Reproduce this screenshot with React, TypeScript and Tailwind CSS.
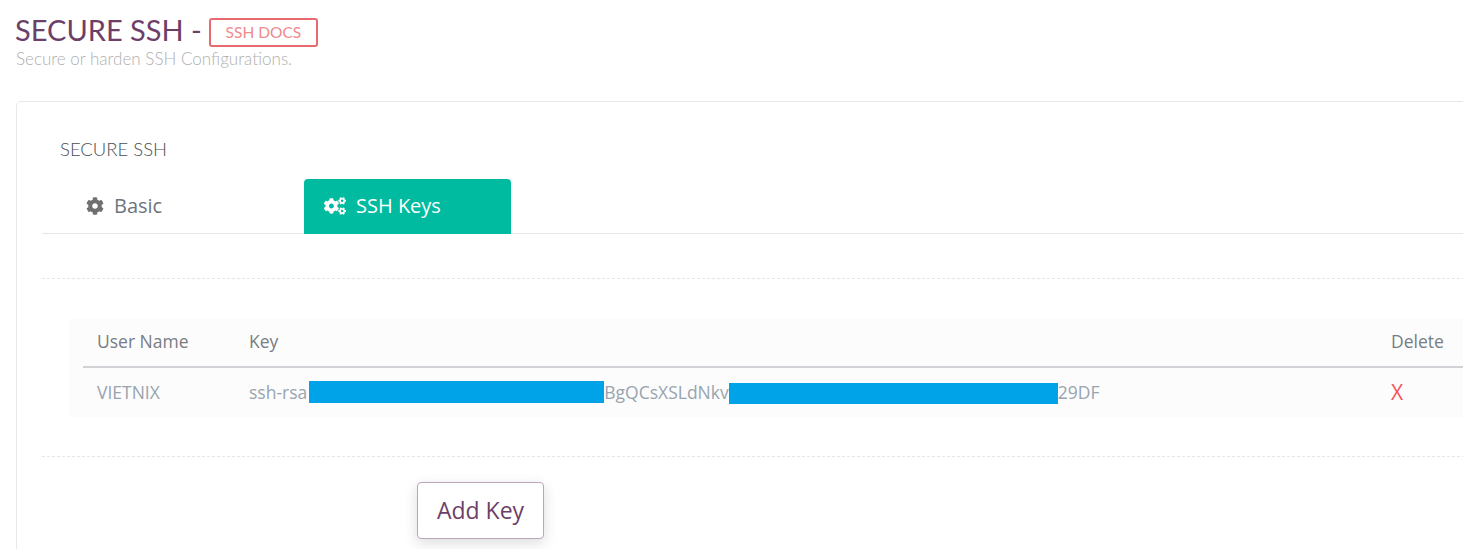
import { FaCog, FaCogs } from 'react-icons/fa';

const openSans = { fontFamily: '"Open Sans", sans-serif' };

export default function App() {
  return (
    <div className="h-[549px] w-[1463px] overflow-hidden bg-white pl-4 font-['Lato',sans-serif]">
      <div className="flex h-[48px] items-end">
        <h1 className="-ml-[1px] text-[29px] leading-[36px] font-normal text-[#6d3f68]">SECURE SSH -</h1>
        <a className="mb-[1px] ml-[7px] flex h-[29px] w-[109px] items-center justify-center rounded-[3px] border-2 border-[#e86a6f] text-[15.5px] text-[#f08a8c]">
          SSH DOCS
        </a>
      </div>
      <p className="h-[53px] text-[17px] leading-[22px] font-light text-[#b0b0b0]">
        Secure or harden SSH Configurations.
      </p>

      <div className="h-[470px] w-[1480px] rounded-[5px] border border-[#e8e8e8] pt-[36px] pl-[25px]">
        <h2 className="pl-[18px] text-[18.5px] leading-[22px] font-light text-[#4a4e52]">SECURE SSH</h2>

        <div className="mt-[19px] flex h-[55px] border-b border-[#e4e6e8]" style={openSans}>
          <div className="flex h-[54px] w-[262px] items-center pl-[44px] text-[20px] text-[#6c757d]">
            <FaCog className="mr-[10px] h-[18px] w-[18px] text-[#6f6f6f]" />
            Basic
          </div>
          <div className="flex h-[55px] w-[207px] items-center rounded-t-[4px] bg-[#00bb9f] pb-[1px] pl-[20px] text-[20px] text-white">
            <FaCogs className="mr-[10px] h-[22px] w-[22px]" />
            SSH Keys
          </div>
        </div>

        <div className="mt-[44px] border-t border-dashed border-[#e4e6e8]" />

        <div className="mt-[40px] ml-[28px] bg-[#fcfcfd] px-[13px]" style={openSans}>
          <div className="flex h-[49px] items-center border-b-2 border-[#d0d2d5] pb-[2px] text-[17.5px] text-[#777d82]">
            <span className="w-[166px] pl-[14px]">User Name</span>
            <span className="w-[1142px]">Key</span>
            <span>Delete</span>
          </div>
          <div className="flex h-[49px] items-center text-[17.5px] text-[#98a4ae]">
            <span className="w-[166px] pl-[14px]">VIETNIX</span>
            <div className="flex w-[1142px] items-center">
              <span>ssh-rsa</span>
              <span className="mb-[2px] ml-[2px] h-[22px] w-[295px] bg-[#00a2e8]" />
              <span>BgQCsXSLdNkv</span>
              <span className="mt-[1px] h-[21px] w-[329px] bg-[#00a2e8]" />
              <span>29DF</span>
            </div>
            <span className="text-[21px] text-[#f4545a]">X</span>
          </div>
        </div>

        <div className="mt-[39px] border-t border-dashed border-[#e4e6e8]" />

        <button
          className="mt-[25px] ml-[375px] h-[57px] w-[127px] rounded-[4px] border border-[#bba5bb] bg-white text-[23px] text-[#6d3f68] shadow-[0_4px_14px_rgba(0,0,0,0.14)]"
          style={openSans}
        >
          Add Key
        </button>
      </div>
    </div>
  );
}
